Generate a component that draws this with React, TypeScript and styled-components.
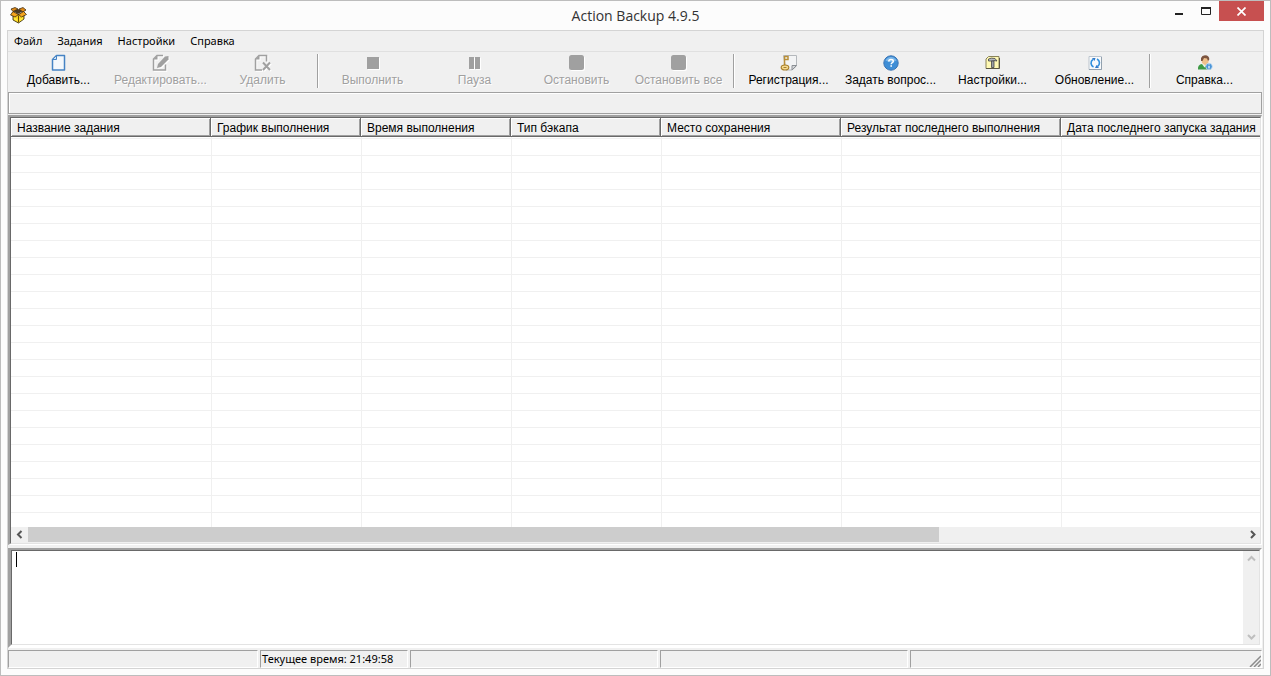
import React from "react";
import styled, { createGlobalStyle, css } from "styled-components";

const color = {
  frame: "#fcfcfc",
  face: "#f0f0f0",
  shadow: "#a0a0a0",
  darkShadow: "#696969",
  light: "#e3e3e3",
  grid: "#f0f0f0",
  thumb: "#cdcdcd",
};

const uiFont = `"Liberation Sans", Arial, sans-serif`;
const menuFont = `"Noto Sans", "Segoe UI", sans-serif`;

const GlobalStyle = createGlobalStyle`
  *, *::before, *::after { box-sizing: border-box; }
  body { margin: 0; background: ${color.frame}; }
  button { font: inherit; color: inherit; border: 0; padding: 0; background: none; }
`;

const Window = styled.div`
  display: flex;
  flex-direction: column;
  height: 100vh;
  padding: 0 6px 6px;
  border: 1px solid #bdbdbd;
  background: ${color.frame};
  font: 12px/14px ${uiFont};
  color: #000;
`;

const TitleBar = styled.header`
  display: grid;
  grid-template-columns: 1fr auto 1fr;
  flex: none;
  height: 29px;
`;

const AppIcon = styled.div`
  padding: 6px 0 0 3px;
  svg { display: block; }
`;

const Title = styled.h1`
  margin: 0;
  font: 14px/29px "Open Sans", "Segoe UI", sans-serif;
  color: #333;
`;

const WindowButtons = styled.div`
  display: flex;
  justify-content: flex-end;
  align-items: flex-start;
`;

const WindowButton = styled.button<{ $close?: boolean }>`
  display: grid;
  place-items: center;
  width: ${(p) => (p.$close ? 45 : 27)}px;
  height: 20px;
  background: ${(p) => (p.$close ? "#c75050" : "transparent")};
`;

const Client = styled.main`
  display: flex;
  flex-direction: column;
  flex: 1;
  min-height: 0;
  border: 1px solid #d4d4d4;
  background: ${color.face};
`;

const MenuBar = styled.nav`
  display: flex;
  flex: none;
  gap: 15px;
  height: 21px;
  padding: 0 6px;
  border-bottom: 1px solid #e0e0e0;
  font: 11px/18px ${menuFont};
`;

const ToolBar = styled.div`
  display: flex;
  flex: none;
  height: 40px;
`;

const ToolButton = styled.button`
  display: flex;
  flex-direction: column;
  align-items: center;
  width: 102px;
  padding: 2px 1px 0 0;
  gap: 2px;
  white-space: nowrap;
  svg { display: block; }
  &:disabled {
    color: ${color.shadow};
    text-shadow: 1px 1px 0 #fff;
  }
  &:disabled svg { filter: drop-shadow(1px 1px 0 #fff); }
`;

const Divider = styled.div`
  width: 8px;
  padding: 2px 3px 4px;
  &::before {
    content: "";
    display: block;
    height: 100%;
    border-left: 1px solid ${color.shadow};
    border-right: 1px solid #fff;
  }
`;

const InfoPanel = styled.div`
  flex: none;
  height: 22px;
  margin-right: 1px;
  border: 1px solid ${color.shadow};
  box-shadow: inset 1px 1px 0 #fff;
`;

const sunken = css`
  border-style: solid;
  border-width: 2px 1px 1px 2px;
  border-color: ${color.shadow} #fff #fff ${color.shadow};
`;

const ListView = styled.section`
  ${sunken}
  flex: 1;
  min-height: 0;
  margin: 1px 1px 3px 0;
`;

const ListInner = styled.div`
  display: flex;
  flex-direction: column;
  height: 100%;
  border: 1px solid;
  border-color: ${color.darkShadow} ${color.light} ${color.light} ${color.darkShadow};
  background: #fff;
`;

const ListBody = styled.div`
  flex: 1;
  min-height: 0;
  overflow: hidden;
`;

const Table = styled.table`
  table-layout: fixed;
  width: 1662px;
  border-spacing: 0;
`;

const HeadCell = styled.th<{ $width?: number }>`
  width: ${(p) => (p.$width ? `${p.$width}px` : "auto")};
  height: 19px;
  padding: 2px 0 0 6px;
  border: 1px solid;
  border-width: 0 1px 1px 0;
  border-color: ${color.darkShadow};
  box-shadow: inset 1px 1px 0 #fff, inset -1px -1px 0 ${color.shadow};
  background: ${color.face};
  font-weight: normal;
  text-align: left;
  white-space: nowrap;
`;

const Row = styled.tr`
  td {
    height: 17px;
    padding: 0;
    border-bottom: 1px solid ${color.grid};
  }
  td + td { border-left: 1px solid ${color.grid}; }
  &:first-child td {
    height: 19px;
    box-shadow: inset 0 1px 0 #fff, inset 0 2px 0 ${color.grid};
  }
`;

const ScrollBar = styled.div<{ $vertical?: boolean }>`
  display: flex;
  flex: none;
  flex-direction: ${(p) => (p.$vertical ? "column" : "row")};
  justify-content: space-between;
  ${(p) => (p.$vertical ? "width: 16px" : "height: 16px")};
  background: ${color.face};
`;

const ScrollButton = styled.button`
  display: grid;
  place-items: center;
  flex: none;
  width: 16px;
  height: 15px;
`;

const Track = styled.div`
  flex: 1;
  padding: 0 1px;
`;

const Thumb = styled.div`
  width: 75%;
  height: 15px;
  background: ${color.thumb};
`;

const LogBox = styled.section`
  ${sunken}
  border-left-width: 3px;
  border-right-width: 2px;
  border-bottom-width: 3px;
  flex: none;
  height: 100px;
  margin-right: 1px;
`;

const LogInner = styled.div`
  display: flex;
  position: relative;
  height: 100%;
  border: 1px solid;
  border-color: ${color.darkShadow} ${color.light} ${color.light} ${color.darkShadow};
  background: #fff;
`;

const LogText = styled.textarea`
  flex: 1;
  min-width: 0;
  padding: 2px 4px;
  border: 0;
  outline: 0;
  resize: none;
  overflow: hidden;
  background: #fff;
  font: 12px/14px ${uiFont};
`;

const Caret = styled.span`
  position: absolute;
  left: 4px;
  top: 1px;
  width: 1px;
  height: 15px;
  background: #000;
`;

const StatusBar = styled.footer`
  display: grid;
  flex: none;
  grid-template-columns: 250px 148px 248px 248px 1fr;
  gap: 2px;
  height: 18px;
  margin: 2px 1px 0 0;
  font: 11px/15px ${menuFont};
`;

const StatusPanel = styled.div`
  display: flex;
  justify-content: space-between;
  padding-left: 1px;
  border: 1px solid;
  border-color: ${color.shadow} #fff #fff ${color.shadow};
  white-space: nowrap;
`;

const Grip = styled.svg`
  margin: 4px 0 0 auto;
`;

const BoxIcon = () => (
  <svg width="17" height="17" viewBox="0 0 17 17">
    <path d="M3 5 8 8 14 5V12L8.500 16 3 13Z" fill="#f8d01c" stroke="#2b2108" strokeWidth=".8" />
    <path d="M8.500 8.500V15.500" stroke="#6b4a05" />
    <path d="M3 4 8 2 13 4 8 7Z" fill="#4a3a24" />
    <path d="M1 2 5 .5 8 2 3 4.500Z" fill="#e08a16" stroke="#2b1c08" strokeWidth=".7" />
    <path d="M9 2 13 .5 16 3 13 5Z" fill="#e08a16" stroke="#2b1c08" strokeWidth=".7" />
    <path d="M3 4.500.500 8 5 10 8.500 7.500Z" fill="#f4a41e" stroke="#2b1c08" strokeWidth=".7" />
    <path d="M13.500 4.500 16.500 7.500 11.500 10 8.500 7.500Z" fill="#f4a41e" stroke="#2b1c08" strokeWidth=".7" />
    <path d="M4 10.500 7.500 12V14.500L4 12.500ZM9.500 12 13 10V12L9.500 14.500Z" fill="#ffe93c" />
  </svg>
);

const IconFrame = ({ children }: { children: React.ReactNode }) => (
  <svg width="17" height="17" viewBox="0 0 17 17" fill="none" aria-hidden="true">
    {children}
  </svg>
);

const AddIcon = () => (
  <IconFrame>
    <path d="M6.500 1.500H14.500V16H2.500V5.500Z" fill="#f4f8fc" stroke="#4583c4" strokeWidth="1.500" strokeLinejoin="round" />
    <path d="M6.500 1.500V5.500H2.500Z" fill="#cfe0f2" stroke="#4583c4" />
  </IconFrame>
);

const EditIcon = () => (
  <IconFrame>
    <path d="M11 1.500H5L1.500 5V16H13.500V10.500" stroke="#a0a0a0" strokeWidth="1.500" />
    <path d="M5.500 1.500V5.500H1.500Z" fill="#a0a0a0" />
    <path d="M5 14 6 10 13 2.500 16.500 2 16.500 5.500 9 13Z" fill="#a0a0a0" />
  </IconFrame>
);

const DeleteIcon = () => (
  <IconFrame>
    <path d="M8 16H1.500V5L5 1.500H12.500V7.500" stroke="#a0a0a0" strokeWidth="1.500" />
    <path d="M5.500 1.500V5.500H1.500Z" fill="#a0a0a0" />
    <path d="M9 8.500 16 16M16 8.500 9 16" stroke="#a0a0a0" strokeWidth="2" />
  </IconFrame>
);

const RunIcon = () => (
  <IconFrame>
    <path d="M3 3H15V15H3Z" fill="#a0a0a0" />
  </IconFrame>
);

const PauseIcon = () => (
  <IconFrame>
    <path d="M3 3H8V15H3ZM9 3H14V15H9Z" fill="#a0a0a0" />
  </IconFrame>
);

const StopIcon = () => (
  <IconFrame>
    <rect x="1" y="1" width="15" height="15" rx="2.500" fill="#a0a0a0" />
  </IconFrame>
);

const RegisterIcon = () => (
  <IconFrame>
    <path d="M3.500 1.500H16.500V12L12 16H6Z" fill="#f3f4f5" stroke="#b4b8bc" />
    <path d="M16.500 11.500H12V16Z" fill="#d4d7da" stroke="#8b8f94" />
    <path d="M4.500 2V11.500M4.500 2.500H8V5.500H5" stroke="#b98f38" strokeWidth="1.500" />
    <ellipse cx="5" cy="13.500" rx="3.800" ry="2.500" fill="#f5dc93" stroke="#a9802c" strokeWidth="1.200" />
    <path d="M3.500 13.500H6.500" stroke="#a9802c" />
  </IconFrame>
);

const AskIcon = () => (
  <IconFrame>
    <circle cx="9" cy="9" r="7.200" fill="#3f8ed6" stroke="#3a74b4" />
    <path d="M3.500 6.500A6 6 0 0 1 14.500 6.500Q9 9.500 3.500 6.500Z" fill="#7ab6e8" />
    <path d="M6.800 7.500Q6.800 5.500 9 5.500T11.300 7.200Q11.300 8 10 8.800 9.200 9.300 9.200 10.300" stroke="#fff" strokeWidth="1.500" />
    <path d="M8.400 11.200H10V12.800H8.400Z" fill="#fff" />
  </IconFrame>
);

const SettingsIcon = () => (
  <IconFrame>
    <path d="M2 5 4.500 2.500H15V14.500H2Z" fill="#fff9b4" stroke="#8a835a" strokeLinejoin="round" />
    <path d="M2 14.500H15.500V4" stroke="#5c5844" />
    <path d="M4.500 7V5Q7 3.500 11 4.500L13 7 10 6.500V7H6.500Z" fill="#b4b8c0" stroke="#444" strokeWidth=".8" />
    <path d="M7.500 7H10V13.500H7.500Z" fill="#9b9fa6" stroke="#444" strokeWidth=".8" />
  </IconFrame>
);

const UpdateIcon = () => (
  <IconFrame>
    <path d="M3 2.500H15.500V15.500H3Z" fill="#f8fafc" stroke="#bcc5ce" />
    <path d="M3 15.500H15.500V3" stroke="#93a1ae" />
    <path d="M7.500 13A4.300 4.300 0 0 1 7 5.500M11 5A4.300 4.300 0 0 1 11.500 12.500" stroke="#2f8fdd" strokeWidth="1.600" />
    <path d="M6 4H9.500L8.500 7ZM13 14H9L10.500 11Z" fill="#2f78c8" />
  </IconFrame>
);

const HelpIcon = () => (
  <IconFrame>
    <path d="M2 15.500Q1.500 10.500 6 10H11Q15 10.500 15 15.500Z" fill="#3d9a45" />
    <path d="M6 10 8.500 13.500 11 10Z" fill="#e9f2e6" />
    <path d="M5.500 4H12.500V8.500L9.500 11.500 6 9Z" fill="#f0c18c" />
    <path d="M5 7V4Q6 1.300 9 1.300 13.500 1.500 13.300 5.500L12 7 11 4.500 8 4 6.500 7Z" fill="#7d5540" />
    <circle cx="13" cy="12.500" r="3.300" fill="#4a94d8" stroke="#d7e8f7" strokeWidth=".7" />
    <path d="M13 10.500V11.300M13 12V14.500" stroke="#fff" strokeWidth="1.200" />
  </IconFrame>
);

type Tool = { label: string; icon: () => React.ReactElement; disabled?: boolean };

const toolGroups: Tool[][] = [
  [
    { label: "Добавить...", icon: AddIcon },
    { label: "Редактировать...", icon: EditIcon, disabled: true },
    { label: "Удалить", icon: DeleteIcon, disabled: true },
  ],
  [
    { label: "Выполнить", icon: RunIcon, disabled: true },
    { label: "Пауза", icon: PauseIcon, disabled: true },
    { label: "Остановить", icon: StopIcon, disabled: true },
    { label: "Остановить все", icon: StopIcon, disabled: true },
  ],
  [
    { label: "Регистрация...", icon: RegisterIcon },
    { label: "Задать вопрос...", icon: AskIcon },
    { label: "Настройки...", icon: SettingsIcon },
    { label: "Обновление...", icon: UpdateIcon },
  ],
  [{ label: "Справка...", icon: HelpIcon }],
];

const columns: { title: string; width?: number }[] = [
  { title: "Название задания", width: 200 },
  { title: "График выполнения", width: 150 },
  { title: "Время выполнения", width: 150 },
  { title: "Тип бэкапа", width: 150 },
  { title: "Место сохранения", width: 180 },
  { title: "Результат последнего выполнения", width: 220 },
  { title: "Дата последнего запуска задания" },
];

const rowCount = 60;

const chevrons = {
  left: "M6.500 1 3 4.500 6.500 8",
  right: "M3 1 6.500 4.500 3 8",
  up: "M1 6.500 4.500 3 8 6.500",
  down: "M1 3 4.500 6.500 8 3",
};

const Chevron = ({ dir, stroke }: { dir: keyof typeof chevrons; stroke: string }) => (
  <svg width="9" height="9" viewBox="0 0 9 9" fill="none">
    <path d={chevrons[dir]} stroke={stroke} strokeWidth="2" />
  </svg>
);

export default function App() {
  return (
    <>
      <GlobalStyle />
      <Window>
        <TitleBar>
          <AppIcon><BoxIcon /></AppIcon>
          <Title>Action Backup 4.9.5</Title>
          <WindowButtons>
            <WindowButton aria-label="Свернуть">
              <svg width="10" height="10"><path d="M1 7H9V9H1Z" fill="#222" /></svg>
            </WindowButton>
            <WindowButton aria-label="Развернуть">
              <svg width="10" height="8" fill="none">
                <path d="M.5 1H9.500V7.500H.5Z" stroke="#222" />
                <path d="M0 1H10" stroke="#222" strokeWidth="2" />
              </svg>
            </WindowButton>
            <WindowButton $close aria-label="Закрыть">
              <svg width="9" height="9"><path d="M.5.5 8.500 8.500M8.500.5.5 8.500" stroke="#fff" strokeWidth="1.700" /></svg>
            </WindowButton>
          </WindowButtons>
        </TitleBar>
        <Client>
          <MenuBar>
            {["Файл", "Задания", "Настройки", "Справка"].map((item) => (
              <button key={item}>{item}</button>
            ))}
          </MenuBar>
          <ToolBar>
            {toolGroups.map((group, i) => (
              <React.Fragment key={i}>
                {i > 0 && <Divider />}
                {group.map(({ label, icon: Icon, disabled }) => (
                  <ToolButton key={label} disabled={disabled}>
                    <Icon />
                    {label}
                  </ToolButton>
                ))}
              </React.Fragment>
            ))}
          </ToolBar>
          <InfoPanel />
          <ListView>
            <ListInner>
              <ListBody>
                <Table>
                  <thead>
                    <tr>
                      {columns.map((c) => (
                        <HeadCell key={c.title} $width={c.width}>{c.title}</HeadCell>
                      ))}
                    </tr>
                  </thead>
                  <tbody>
                    {Array.from({ length: rowCount }, (_, r) => (
                      <Row key={r}>
                        {columns.map((c) => <td key={c.title} />)}
                      </Row>
                    ))}
                  </tbody>
                </Table>
              </ListBody>
              <ScrollBar>
                <ScrollButton aria-label="Влево"><Chevron dir="left" stroke="#555" /></ScrollButton>
                <Track><Thumb /></Track>
                <ScrollButton aria-label="Вправо"><Chevron dir="right" stroke="#555" /></ScrollButton>
              </ScrollBar>
            </ListInner>
          </ListView>
          <LogBox>
            <LogInner>
              <LogText aria-label="Журнал" />
              <Caret />
              <ScrollBar $vertical>
                <ScrollButton disabled aria-label="Вверх"><Chevron dir="up" stroke="#bfbfbf" /></ScrollButton>
                <ScrollButton disabled aria-label="Вниз"><Chevron dir="down" stroke="#bfbfbf" /></ScrollButton>
              </ScrollBar>
            </LogInner>
          </LogBox>
          <StatusBar>
            <StatusPanel />
            <StatusPanel>Текущее время: 21:49:58</StatusPanel>
            <StatusPanel />
            <StatusPanel />
            <StatusPanel>
              <Grip width="12" height="12">
                <path d="M1 12 12 1M5 12 12 5M9 12 12 9" stroke="#8c8c8c" strokeWidth="1.500" />
              </Grip>
            </StatusPanel>
          </StatusBar>
        </Client>
      </Window>
    </>
  );
}
